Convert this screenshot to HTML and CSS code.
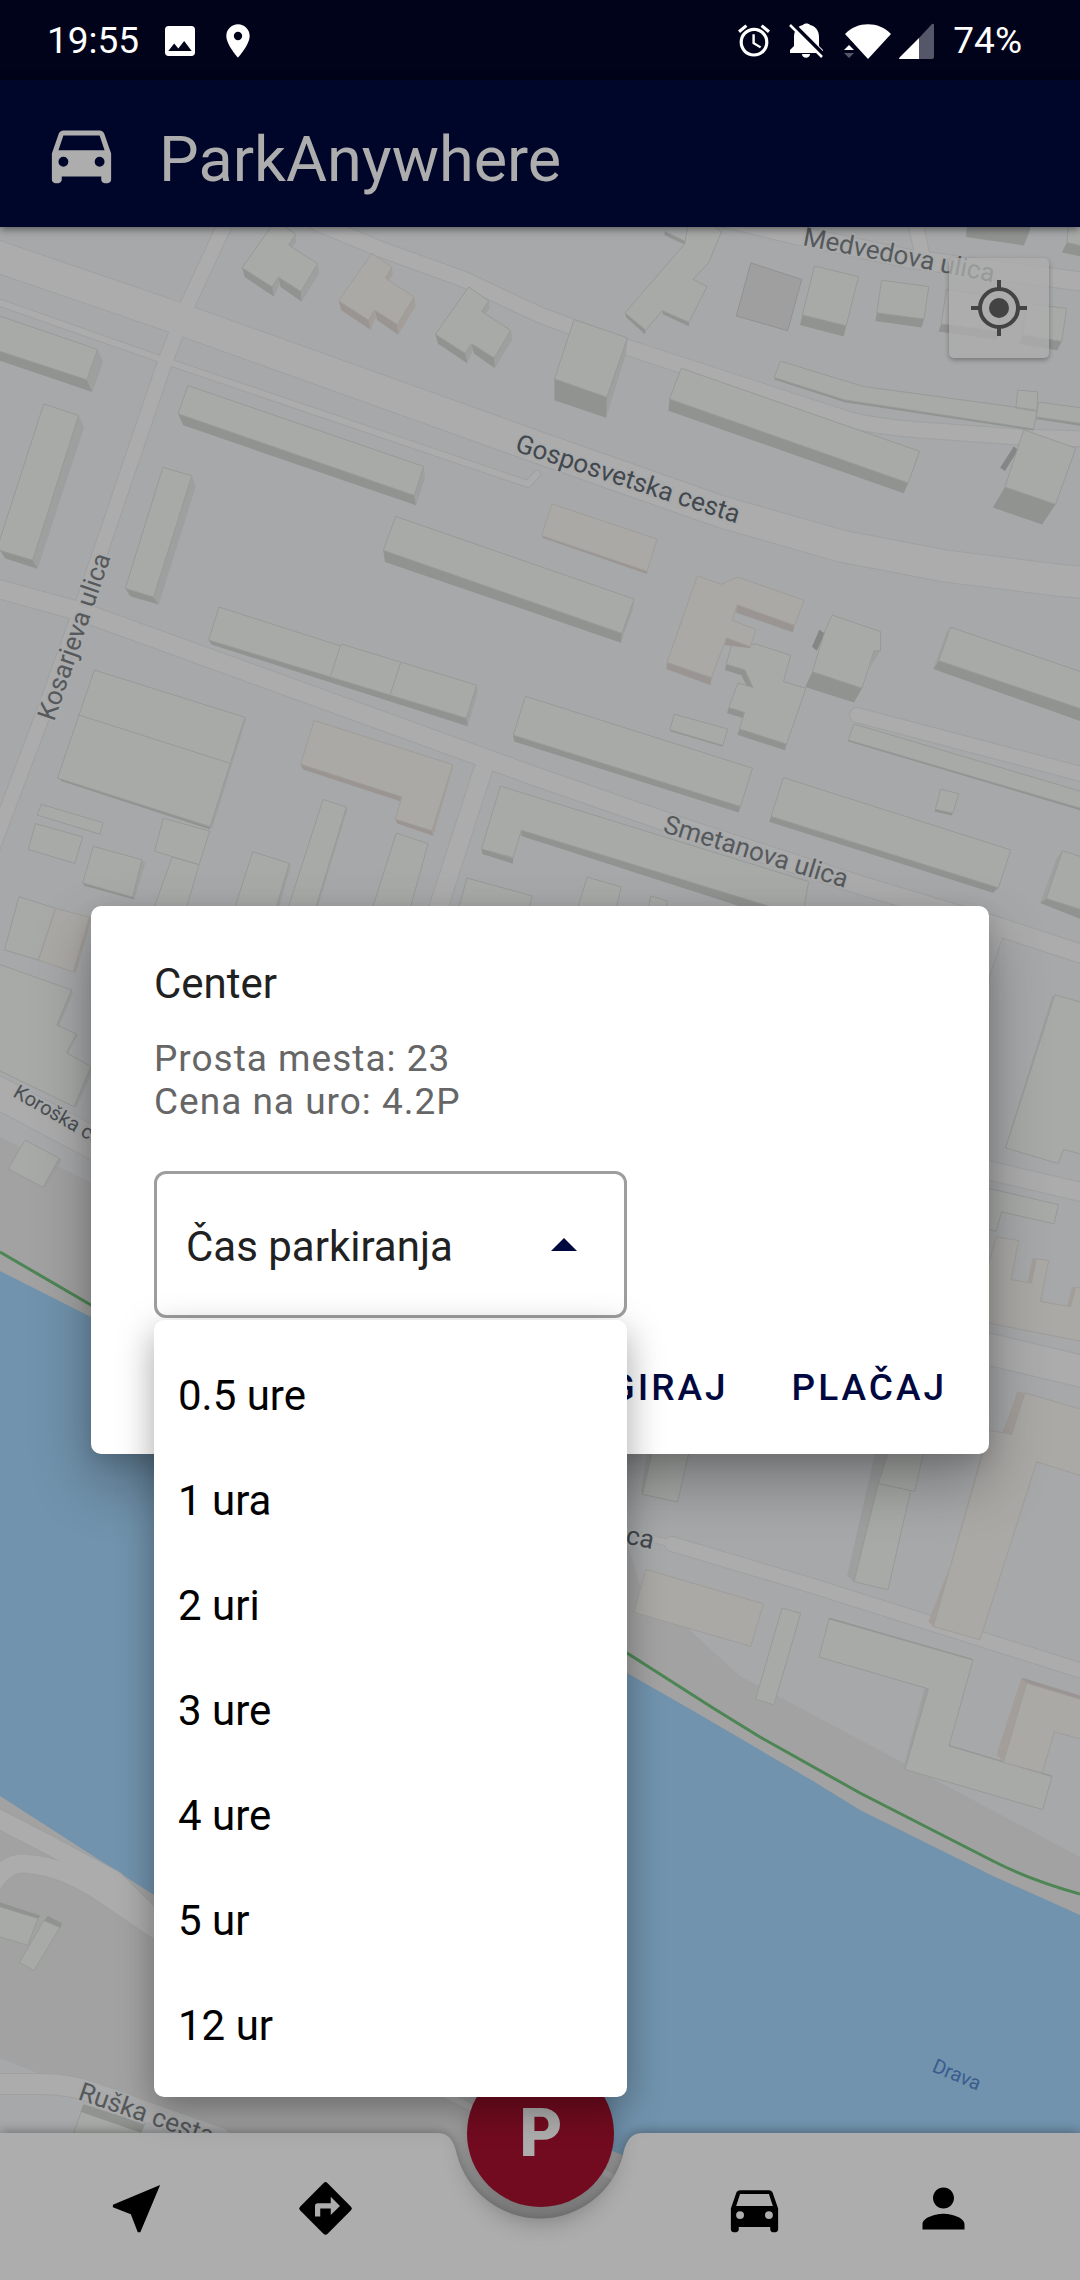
FILE: index.html
```html
<!DOCTYPE html>
<html lang="sl">
<head>
<meta charset="utf-8">
<meta name="viewport" content="width=device-width, initial-scale=1">
<title>ParkAnywhere</title>
<link rel="stylesheet" href="styles.css">
</head>
<body>
<div class="app">
  <div class="status-bar">
    <span class="status-text">19:55</span>
    <span class="status-notes">
      <svg width="40" height="40" viewBox="0 0 24 24" fill="currentColor" aria-hidden="true"><path d="M21 19V5c0-1.100-.9-2-2-2H5c-1.100 0-2 .9-2 2v14c0 1.100.9 2 2 2h14c1.100 0 2-.9 2-2zM8.500 13.500l2.500 3.010L14.500 12l4.500 6H5l3.500-4.500z"/></svg>
      <svg width="40" height="40" viewBox="0 0 24 24" fill="currentColor" aria-hidden="true"><path d="M12 2C8.130 2 5 5.130 5 9c0 5.250 7 13 7 13s7-7.750 7-13c0-3.870-3.130-7-7-7zm0 9.500a2.500 2.500 0 0 1 0-5 2.500 2.500 0 0 1 0 5z"/></svg>
    </span>
    <span class="status-system">
      <svg width="32" height="34" viewBox="2 2 20 20.500" fill="currentColor" aria-hidden="true"><path d="M22 5.720l-4.600-3.860-1.290 1.530 4.600 3.860L22 5.720zM7.880 3.390L6.600 1.860 2 5.710l1.290 1.530 4.590-3.850zM12.500 8H11v6l4.750 2.850.75-1.230-4-2.370V8zM12 4c-4.970 0-9 4.030-9 9s4.020 9 9 9a9 9 0 0 0 0-18zm0 16c-3.870 0-7-3.130-7-7s3.130-7 7-7 7 3.130 7 7-3.130 7-7 7z"/></svg>
      <svg width="36" height="36" viewBox="0 0 36 36" aria-hidden="true"><path fill="currentColor" d="M1 30v-3l4-4v-9C5 7 9 3 14 2c1-2 6-2 7 0 5 1 9 5 9 12v9l4 4v3zM13 31h8c0 5-8 5-8 0z"/><path d="M3 0l33 33" stroke="#00031a" stroke-width="4"/><path d="M1 2l32 32" stroke="currentColor" stroke-width="2.500"/></svg>
      <svg class="wifi" width="48" height="36" viewBox="0 0 48 36" aria-hidden="true"><path fill="currentColor" d="M1 11C13-2 35-2 47 11L24 36z"/><path fill="#00031a" d="M0 18h7l3 3v15H0z"/><path fill="currentColor" d="M0 27l5-5 5 5z"/><path fill="#555768" d="M0 30h10l-5 5z"/></svg>
      <svg width="35" height="36" viewBox="0 0 35 36" aria-hidden="true"><path fill="#555768" d="M20 15L33 1q2-1 2 1v32q0 2-2 2H20z"/><path fill="currentColor" d="M20 15v21H1q-2 0 0-2z"/></svg>
      <span class="status-text battery">74%</span>
    </span>
  </div>

  <header class="app-bar">
    <svg width="79" height="79" viewBox="0 0 24 24" fill="currentColor" aria-hidden="true"><path id="car" d="M18.920 6.010C18.720 5.420 18.160 5 17.500 5h-11c-.66 0-1.210.42-1.420 1.010L3 12v8c0 .55.45 1 1 1h1c.55 0 1-.45 1-1v-1h12v1c0 .55.45 1 1 1h1c.55 0 1-.45 1-1v-8l-2.080-5.990zM6.500 16a1.500 1.500 0 0 1 0-3 1.500 1.500 0 0 1 0 3zm11 0a1.500 1.500 0 0 1 0-3 1.500 1.500 0 0 1 0 3zM5 11l1.500-4.500h11L19 11H5z"/></svg>
    <h1 class="app-title">ParkAnywhere</h1>
  </header>

  <main class="map-area">
    <svg class="map" viewBox="0 227 1080 2053" preserveAspectRatio="xMidYMid slice" role="img" aria-label="Zemljevid">
      <defs>
        <g id="house">
          <path class="front" d="M703 107L796 150V172L711 128zM808 128L874 160L876 183L815 150z"/>
          <path class="side" d="M922 98L927 118L876 183L874 160zM808 128L812 142L796 172L790 150zM858 32L860 50L845 64L838 56z"/>
          <path class="roof" d="M800 1L858 32L838 56L922 98L874 160L808 128L790 150L703 107z"/>
        </g>
      </defs>

      <!-- land and river -->
      <path class="park" d="M0 1137L91 1183L500 1400L620 1520L640 1585L740 1676L900 1761L1080 1857V2280H0z"/>
      <path class="land" d="M0 2058L35 2072L94 2090L240 2140V2280H0z"/>
      <path class="water" d="M0 1271L91 1317L420 1560L627 1673L690 1709L813 1781L860 1810L993 1876L1080 1915V2280H840L623 2155L612 2151L154 1895L0 1796z"/>
      <path class="trail" d="M0 1252L91 1305L420 1520L627 1653L713 1708L760 1737L860 1793L993 1861Q1030 1880 1080 1894"/>

      <!-- roads: casing first, then the surface -->
      <g class="casing">
        <path stroke-width="8" d="M-5 301L160 359L528 484L537 474M642 1536L672 1544M440 2092L640 2190"/>
        <path stroke-width="16" d="M226 222L187 306L165 362L82 606L42 717L-10 855M915 220L922 254M857 715L1085 775M672 1544L813 1586L1085 1672"/>
        <path stroke-width="17" d="M315 222L380 249L463 279L540 315L626 347L746 386L850 420Q880 427 920 430L1020 437L1085 439"/>
        <path stroke-width="20" d="M700 212L800 236L910 259L1085 282M-5 588L82 612L540 778L690 830L860 885L990 924L1085 955M483 770L436 915M975 1167L1085 1193M995 930L975 990M-5 1817L49 1845L114 1880L160 1925M-8 1885Q8 1860 28 1864Q60 1866 98 1890L160 1932"/>
        <path stroke-width="22" d="M-5 2084H40Q70 2084 94 2093L220 2138"/>
        <path stroke-width="33" d="M-10 254L180 319L540 448L722 512L841 546L945 566L1056 580L1090 583M975 1346L1085 1372M-5 1091L95 1144"/>
      </g>
      <g class="road">
        <path stroke-width="6" d="M-5 301L160 359L528 484L537 474M642 1536L672 1544M440 2092L640 2190"/>
        <path stroke-width="14" d="M226 222L187 306L165 362L82 606L42 717L-10 855M915 220L922 254M857 715L1085 775M672 1544L813 1586L1085 1672"/>
        <path stroke-width="15" d="M315 222L380 249L463 279L540 315L626 347L746 386L850 420Q880 427 920 430L1020 437L1085 439"/>
        <path stroke-width="18" d="M700 212L800 236L910 259L1085 282M-5 588L82 612L540 778L690 830L860 885L990 924L1085 955M483 770L436 915M975 1167L1085 1193M995 930L975 990M-5 1817L49 1845L114 1880L160 1925M-8 1885Q8 1860 28 1864Q60 1866 98 1890L160 1932"/>
        <path stroke-width="20" d="M-5 2084H40Q70 2084 94 2093L220 2138"/>
        <path stroke-width="31" d="M-10 254L180 319L540 448L722 512L841 546L945 566L1056 580L1090 583M975 1346L1085 1372M-5 1091L95 1144"/>
      </g>

      <!-- buildings, north-west -->
      <g transform="translate(0 220) scale(.34439 .44643)">
        <path class="side" d="M283 290L299 318L268 385L252 358zM228 438L244 464L109 781L95 762zM1230 552L1234 578L1208 639L1203 617zM557 573L568 597L461 861L446 845zM1841 849L1838 872L1803 947L1806 926zM1384 1042L1387 1058L1358 1134L1354 1116zM711 1114L714 1120L616 1363L606 1357zM412 1433L422 1440L390 1522L383 1517zM840 1441L845 1445L808 1545H798zM1006 1315L1009 1320L920 1545H912z"/>
        <path class="front" d="M0 293L252 358L268 385L0 315zM0 740L95 762L109 781L15 758zM517 434L1203 617L1208 639L532 460zM364 825L446 845L461 861L378 843zM1113 740L1806 926L1803 947L1118 766zM606 941L1354 1116L1358 1134L614 951zM167 1250L610 1359V1365L180 1257zM1490 1154L2150 1314L2145 1327L1493 1168zM1514 1367L2238 1535L2180 1545L1514 1380zM1398 1409L1490 1430L1489 1442L1400 1420zM240 1485L385 1517L390 1522L245 1491z"/>
        <path class="roof" d="M-5 214L283 290L252 358L-5 293zM127 412L228 438L95 762L-5 739V727zM546 371L1230 552L1203 617L517 434zM473 554L557 573L446 845L364 825zM1149 664L1841 849L1806 926L1113 740zM636 867L988 954L992 950L1384 1042L1354 1116L606 941zM988 954L960 1022M1164 990L1133 1063M274 1008L711 1114L610 1359L167 1250zM226 1108L664 1216M1526 1067L2185 1228L2150 1314L1490 1154zM1453 1268L2348 1482L2330 1560L1514 1367L1490 1428L1398 1409zM120 1309L299 1350L291 1376L108 1333zM103 1352L240 1382L217 1441L82 1410zM271 1403L412 1433L385 1517L240 1485zM474 1340L609 1369L578 1444L449 1414zM500 1427L578 1444L540 1545H445zM734 1415L840 1441L800 1545H680zM938 1298L1006 1315L915 1545H835zM1151 1373L1243 1397L1190 1545H1080zM1356 1474L1545 1514L1535 1545H1330z"/>
        <use href="#house"/>
        <use href="#house" x="561" y="149"/>
        <g class="beige">
          <use href="#house" x="280" y="74"/>
          <path class="front" d="M873 1219L1167 1292L1162 1302L880 1231zM1148 1342L1254 1368L1258 1379L1153 1352z"/>
          <path class="side" d="M1315 1220L1313 1232L1258 1379L1254 1368z"/>
          <path class="roof" d="M912 1121L1315 1220L1254 1368L1148 1342L1167 1292L873 1219z"/>
        </g>
      </g>

      <!-- buildings, north-east -->
      <g transform="translate(540 220) scale(.34439 .44643)">
        <path class="side" d="M254 264L250 298L192 443L194 397zM1102 518L1100 528L1062 605L1069 589zM970 965H989L957 1004zM1192 912L1180 925L1142 1006L1158 987zM1517 1413L1500 1430L1452 1530L1470 1520z"/>
        <path class="front" d="M247 208L307 247L305 256L250 218zM355 203L433 229L432 238L357 211zM362 25L424 48L420 55L362 34zM762 213L889 237L882 261L755 235zM978 208L1115 222L1108 241L974 226zM1165 233L1330 250L1325 268L1157 250zM1400 258L1515 272L1502 292L1392 278zM1240 10H1423V22L1405 57L1237 38zM1530 50L1568 58V81L1515 73zM42 356L194 397L192 443L42 404zM376 401L1069 589L1056 612L373 427zM680 353L885 403L1433 466V472L885 408L682 358zM1440 441L1568 455V461L1440 446zM1350 598L1497 637L1458 682L1315 644zM541 995L595 1008L619 1047L600 1043L585 1020L537 1008zM548 1092L594 1103L591 1116L543 1105zM579 1140L716 1174L711 1188L573 1153zM791 1012L935 1049L912 1081L770 1046zM1158 987L1568 1094V1122L1142 1006zM1148 1320L1199 1329L1195 1334L1145 1325zM671 1336L1331 1496L1315 1507L665 1348zM895 1163L1568 1316V1322L895 1168zM377 1141L531 1175V1180L378 1145zM1470 1520L1568 1545V1565L1452 1530z"/>
        <path class="dark" d="M1376 507L1388 515L1350 562L1336 555zM811 918L827 926L804 965L790 956z"/>
        <path class="roof" d="M430 10H500L527 26L490 95L445 133L485 149L433 229L355 203L307 247L247 208L420 54zM797 103L925 127L889 237L762 213zM992 135L1129 149L1115 222L978 208zM1180 156L1340 172L1330 250L1165 233zM1415 187L1529 198L1515 272L1400 258zM1535 10H1575V58L1530 50zM99 223L254 264L194 397L42 356zM410 332L1102 518L1069 589L376 401zM698 316L850 352L940 373L1445 426L1433 468L885 403L680 353zM1448 408L1575 421V456L1440 441zM1387 381L1445 385L1443 429L1382 421zM1405 470L1556 511L1497 637L1350 598zM556 953L627 950L728 975L707 1034L772 1049L716 1174L579 1140L594 1103L548 1092L575 1037L618 1047L595 1008L541 995zM848 885L989 922V965H970L935 1049L791 1012L827 922zM1192 912L1575 1013V1096L1158 987zM390 1107L545 1140L531 1177L377 1142zM912 1129L1575 1281V1319L895 1165zM1163 1275L1216 1285L1199 1329L1148 1320zM707 1249L1367 1411L1331 1496L671 1336zM1517 1413L1575 1427V1545L1470 1520zM137 1472L236 1494L222 1540H110zM322 1514L371 1526L365 1540H315z"/>
        <path class="lot" d="M612 96L760 133L719 248L570 215z"/>
        <g class="beige">
          <path class="front" d="M5 707L311 787V793L7 712zM573 862L739 908L735 924L569 879zM541 936L611 955L610 959L537 952zM369 991L498 1026L495 1042L367 1006z"/>
          <path class="roof" d="M35 636L340 715L311 787L5 707zM457 797L525 816L575 800L767 852L739 908L573 862L558 897L627 917L611 956L541 936L498 1025L369 991z"/>
        </g>
      </g>

      <!-- buildings, west bank -->
      <g transform="translate(0 900) scale(.34439 .33333)">
        <path class="side" d="M208 270L212 278L172 377L163 375zM218 402L226 405L198 458L190 458zM264 500L270 510L222 620L212 618zM172 775L180 780L132 862L122 860z"/>
        <path class="roof" d="M55 -10L162 25L112 180L13 150zM-5 192L208 270L165 375L222 402L193 458L264 500L215 620L-5 510zM73 720L172 775L125 862L24 807z"/>
        <g class="beige">
          <path class="side" d="M260 52L266 58L220 218L211 214z"/>
          <path class="roof" d="M162 25L260 52L213 216L112 180z"/>
        </g>
      </g>

      <!-- buildings, east -->
      <g transform="translate(540 900) scale(.34439 .38265)">
        <path class="side" d="M1497 248L1487 251L1350 648L1362 651z"/>
        <path class="roof" d="M1495 248L1575 268V665L1520 652L1505 689L1352 648zM1300 753L1505 796L1493 846L1340 815L1325 866L1300 861z"/>
        <g class="beige">
          <path class="side" d="M1427 1001L1416 998L1430 937H1441zM1540 1065L1530 1062L1545 1012H1556zM1385 1284L1408 1289L1368 1397L1350 1395z"/>
          <path class="roof" d="M1325 880L1390 890L1368 992L1427 1001L1441 937L1477 942L1453 1049L1540 1063L1556 1012L1575 1014V1154L1300 1105V960z"/>
        </g>
      </g>
      <g transform="translate(600 1400) scale(.33333 .47189)">
        <path class="side" d="M158 105H143L123 190L127 200zM868 105H828L742 372L762 385zM985 612L974 610L910 780L918 784z"/>
        <path class="front" d="M687 461L1119 549L1115 556L690 469zM1047 731L1356 796L1350 802L1049 738z"/>
        <path class="roof" d="M158 105H269L233 216L127 200zM868 105H973L944 193L932 192L864 402L762 385L835 177zM835 177L932 192M546 441L602 452L522 646L467 634zM687 464L1119 551L1047 733L1356 798L1328 868L915 783L985 612L657 545z"/>
        <g class="beige">
          <path class="side" d="M1250 -10H1275L1235 73L1150 100L1000 480L985 470zM1265 588L1280 600L1210 768L1190 750z"/>
          <path class="front" d="M1265 588L1440 626V636L1280 602z"/>
          <path class="roof" d="M1275 -15L1445 20V161L1310 131L1140 508L1000 480L1168 64L1235 73zM137 359L490 432L452 522L102 450zM1280 600L1445 635V719L1363 703L1327 790L1210 768z"/>
        </g>
      </g>

      <!-- buildings, south bank -->
      <g transform="translate(0 1760) scale(.40816 .33333)">
        <path class="roof" d="M-5 438L93 475L68 556L-5 529zM108 480L148 500L83 632L48 607zM205 1035L355 1090L345 1120H180z"/>
        <path class="front" d="M0 427L100 467L93 475L0 440zM117 467L152 490L148 504L108 482zM205 1033L355 1093L345 1118L197 1055z"/>
      </g>

      <g class="labels">
        <text x="802" y="245" transform="rotate(11 802 245)">Medvedova ulica</text>
        <text class="major" x="514" y="451" transform="rotate(18 514 451)">Gosposvetska cesta</text>
        <text x="54" y="722" transform="rotate(-71 54 722)">Kosarjeva ulica</text>
        <text x="662" y="832" transform="rotate(17 662 832)">Smetanova ulica</text>
        <text class="minor" x="12" y="1096" transform="rotate(30 12 1096)">Koroška cesta</text>
        <text class="major" x="652" y="1549" text-anchor="end" transform="rotate(12 652 1549)">ulica</text>
        <text x="77" y="2099" transform="rotate(19 77 2099)">Ruška cesta</text>
        <text class="river" x="931" y="2071" transform="rotate(23 931 2071)">Drava</text>
      </g>
    </svg>

    <button class="locate" type="button" aria-label="Moja lokacija">
      <svg width="56" height="56" viewBox="0 0 56 56" fill="none" stroke="currentColor" stroke-width="4" aria-hidden="true"><circle cx="28" cy="28" r="19"/><circle cx="28" cy="28" r="10" fill="currentColor" stroke="none"/><path d="M28 0v9M28 47v9M0 28h9M47 28h9"/></svg>
    </button>
  </main>

  <nav class="bottom-bar" aria-label="Glavni meni">
    <svg class="bar-shape" viewBox="0 0 1080 147" preserveAspectRatio="xMidYMin slice" aria-hidden="true"><path d="M0 0H438C451 0 455 12 457 22A86 86 0 0 0 623 22C625 12 629 0 642 0H1080V147H0z"/></svg>
    <button class="nav-item" type="button" aria-label="Lokacija"><svg width="63" height="63" viewBox="0 0 24 24" fill="currentColor"><path d="M21 3L3 10.530v.98l6.840 2.650L12.480 21h.98L21 3z"/></svg></button>
    <button class="nav-item" type="button" aria-label="Pot"><svg width="63" height="63" viewBox="0 0 24 24" fill="currentColor"><path d="M21.710 11.290l-9-9a.996.996 0 0 0-1.410 0l-9 9a.996.996 0 0 0 0 1.410l9 9c.39.39 1.020.39 1.410 0l9-9a.996.996 0 0 0 0-1.410zM14 14.500V12h-4v3H8v-4c0-.55.45-1 1-1h5V7.500l3.500 3.500-3.500 3.500z"/></svg></button>
    <button class="fab" type="button">P</button>
    <button class="nav-item" type="button" aria-label="Vozila"><svg width="63" height="63" viewBox="0 0 24 24" fill="currentColor"><use href="#car"/></svg></button>
    <button class="nav-item" type="button" aria-label="Profil"><svg width="63" height="63" viewBox="0 0 24 24" fill="currentColor"><path d="M12 12c2.210 0 4-1.790 4-4s-1.790-4-4-4-4 1.790-4 4 1.790 4 4 4zm0 2c-2.670 0-8 1.340-8 4v2h16v-2c0-2.660-5.330-4-8-4z"/></svg></button>
  </nav>

  <div class="overlay">
    <section class="dialog" role="dialog" aria-modal="true" aria-labelledby="dialog-title">
      <div class="dialog-body">
        <h2 class="dialog-title" id="dialog-title">Center</h2>
        <p class="dialog-text">Prosta mesta: 23<br>Cena na uro: 4.2P</p>
        <div class="field">
          <select class="field-select" aria-label="Čas parkiranja"><option>Čas parkiranja</option></select>
          <svg class="field-arrow" width="26" height="13" viewBox="0 0 26 13" aria-hidden="true"><path fill="currentColor" d="M0 13L13 0l13 13z"/></svg>
          <ul class="menu" role="listbox" aria-label="Čas parkiranja">
            <li class="menu-item" role="option">0.5 ure</li>
            <li class="menu-item" role="option">1 ura</li>
            <li class="menu-item" role="option">2 uri</li>
            <li class="menu-item" role="option">3 ure</li>
            <li class="menu-item" role="option">4 ure</li>
            <li class="menu-item" role="option">5 ur</li>
            <li class="menu-item" role="option">12 ur</li>
          </ul>
        </div>
      </div>
      <div class="dialog-actions">
        <button class="text-button" type="button">NAVIGIRAJ</button>
        <button class="text-button" type="button">PLAČAJ</button>
      </div>
    </section>
  </div>
</div>
</body>
</html>
```
FILE: styles.css
```css
:root {
  --navy: #00093f;
  --dimmed-white: #adadad;
}

* { box-sizing: border-box; }

body {
  margin: 0;
  font-family: Roboto, "Liberation Sans", sans-serif;
}

button, select { font-family: inherit; }

button {
  border: 0;
  padding: 0;
  background: none;
}

svg { display: block; flex: none; }

.app {
  position: relative;
  display: flex;
  flex-direction: column;
  min-height: 100vh;
}

/* Status bar */
.status-bar {
  display: flex;
  align-items: center;
  height: 80px;
  padding: 2px 58px 0 47px;
  background: #00031a;
  color: #fff;
}

.status-text { font-size: 37px; line-height: 44px; }

.status-notes {
  display: flex;
  gap: 18px;
  margin-left: 21px;
}

.status-system {
  display: flex;
  align-items: center;
  gap: 19px;
  margin-left: auto;
}

.wifi { margin-right: -12px; }

/* App bar */
.app-bar {
  position: relative;
  z-index: 1;
  display: flex;
  align-items: center;
  gap: 38px;
  height: 147px;
  padding: 0 42px;
  background: #00062a;
  box-shadow: 0 2px 8px rgba(0, 0, 0, .5);
  color: var(--dimmed-white);
}

.app-title {
  margin: 12px 0 0;
  font-size: 63px;
  font-weight: 400;
  line-height: 74px;
}

/* Map */
.map-area {
  position: relative;
  flex: 1;
  min-height: 900px;
  background: #a6a8aa;
}

.map {
  position: absolute;
  inset: 0;
  width: 100%;
  height: 100%;
  --roof: #a8aaa8;
  --side: #9e9f9e;
  --front: #919391;
  --edge: #989a98;
}

.beige {
  --roof: #aaa9a6;
  --side: #a39e9a;
  --front: #9a9592;
  --edge: #a09d99;
}

.land { fill: #a6a8aa; }
.park { fill: #a2a2a2; }
.water { fill: #7193ad; }
.trail { fill: none; stroke: #4d8554; stroke-width: 3; }
.casing, .road { fill: none; stroke-linecap: round; stroke-linejoin: round; }
.casing { stroke: #9fa0a1; }
.road { stroke: #acacac; }
.roof { fill: var(--roof); stroke: var(--edge); vector-effect: non-scaling-stroke; }
.side { fill: var(--side); }
.front { fill: var(--front); }
.dark { fill: #858685; }
.lot { fill: #9f9f9f; stroke: #929292; vector-effect: non-scaling-stroke; }

.labels {
  fill: #56595b;
  stroke: #a9aaab;
  stroke-width: 4;
  paint-order: stroke;
  font-size: 26px;
}

.labels .major { fill: #42484d; }
.labels .minor { fill: #4b5054; font-size: 20px; }
.labels .river { fill: #3a5c8e; stroke: none; font-size: 20px; }

.locate {
  position: absolute;
  top: 31px;
  right: 31px;
  display: grid;
  place-items: center;
  width: 100px;
  height: 100px;
  border-radius: 5px;
  background: rgba(173, 173, 173, .75);
  box-shadow: 0 2px 5px rgba(0, 0, 0, .3);
  color: #434343;
}

/* Bottom bar */
.bottom-bar {
  position: absolute;
  inset: auto 0 0;
  display: grid;
  grid-template-columns: 1fr 1fr 240px 1fr 1fr;
  justify-items: center;
  height: 147px;
  padding: 0 42px;
}

.bar-shape {
  position: absolute;
  inset: 0;
  width: 100%;
  height: 100%;
  overflow: visible;
  fill: var(--dimmed-white);
  filter: drop-shadow(0 -1px 6px rgba(0, 0, 0, .35));
}

.nav-item {
  position: relative;
  align-self: center;
  padding-top: 4px;
  color: #000;
}

.fab {
  position: relative;
  width: 147px;
  height: 147px;
  margin-top: -73px;
  padding-left: 2px;
  border-radius: 50%;
  background: #720b1f;
  box-shadow: 0 14px 24px rgba(0, 0, 0, .28);
  color: var(--dimmed-white);
  font-size: 66px;
  font-weight: 900;
}

/* Dialog */
.overlay {
  position: absolute;
  inset: 80px 0 0;
  z-index: 2;
  display: grid;
  align-items: center;
  padding: 0 91px;
}

.dialog {
  border-radius: 10px;
  background: #fff;
  box-shadow: 0 28px 60px rgba(0, 0, 0, .3), 0 6px 20px rgba(0, 0, 0, .12);
}

.dialog-body { padding: 54px 63px 0; }

.dialog-title {
  margin: 0;
  color: #212121;
  font-size: 42px;
  font-weight: 400;
  line-height: 48px;
}

.dialog-text {
  margin: 29px 0 48px;
  color: #666;
  font-size: 37px;
  letter-spacing: 1px;
  line-height: 43px;
}

.field {
  position: relative;
  display: flex;
  align-items: center;
  width: 473px;
  max-width: 100%;
  color: var(--navy);
}

.field-select {
  appearance: none;
  width: 100%;
  height: 147px;
  padding: 4px 96px 0 29px;
  border: 3px solid #9e9e9e;
  border-radius: 12px;
  background: #fff;
  color: #212121;
  font-size: 42px;
}

.field-arrow {
  position: absolute;
  right: 50px;
  pointer-events: none;
}

.menu {
  position: absolute;
  top: calc(100% + 2px);
  left: 0;
  right: 0;
  margin: 0;
  padding: 23px 0 19px;
  border-radius: 10px;
  background: #fff;
  box-shadow: 0 12px 36px rgba(0, 0, 0, .35);
  color: #000;
  font-size: 42px;
  line-height: 105px;
  list-style: none;
}

.menu-item { padding: 0 24px; }

.dialog-actions {
  display: flex;
  justify-content: flex-end;
  gap: 21px;
  padding: 22px 21px 20px;
}

.text-button {
  height: 94px;
  padding: 0 21px;
  color: var(--navy);
  font-size: 37px;
  font-weight: 500;
  letter-spacing: 3px;
}
```
